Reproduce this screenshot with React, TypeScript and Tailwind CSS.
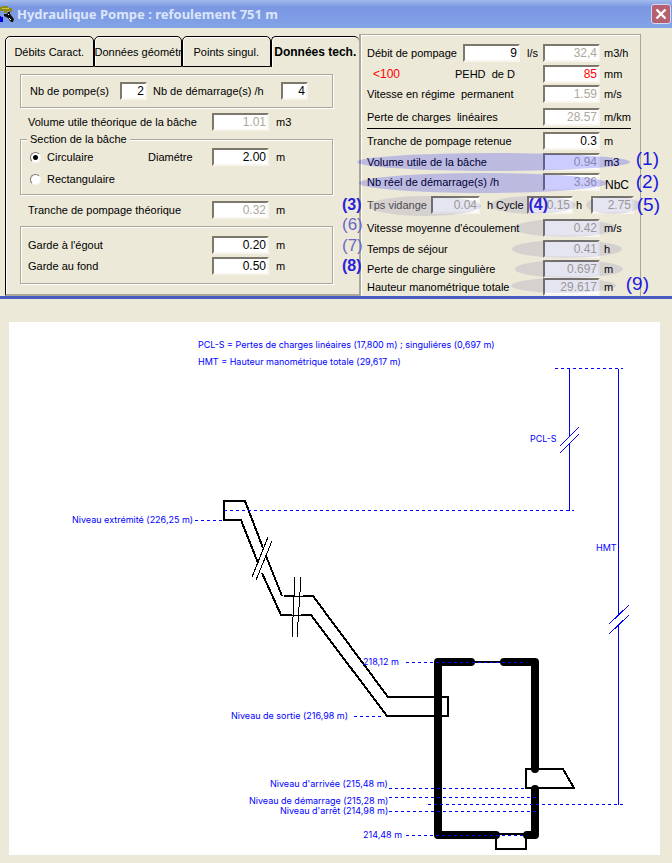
import React from "react";
import { clsx } from "clsx";

const etched =
  "border border-[#aca899] shadow-[1px_1px_0_#fff,inset_1px_1px_0_#fff]";

const radio =
  "mr-[6px] h-[11px] w-[11px] appearance-none rounded-full border border-t-[#7c796c] border-l-[#7c796c] border-r-[#f7f5ec] border-b-[#f7f5ec] bg-white checked:bg-[radial-gradient(circle,#000_2px,#fff_3px)]";

function Field({
  id,
  value,
  width = "w-[57px]",
  tone = "text-black",
  label,
}: {
  id?: string;
  value: string;
  width?: string;
  tone?: string;
  label?: string;
}) {
  return (
    <input
      id={id}
      aria-label={label}
      defaultValue={value}
      className={clsx(
        "h-[18px] shrink-0 border-2 border-t-[#7c796c] border-l-[#7c796c] border-r-[#f7f5ec] border-b-[#f7f5ec] bg-white pr-px text-right text-[12px] leading-[14px] outline-none",
        width,
        tone,
      )}
    />
  );
}

const GREY = "text-[#aca899]";

function LeftRow({
  id,
  label,
  value,
  unit,
  tone,
  className,
}: {
  id: string;
  label: string;
  value: string;
  unit: string;
  tone?: string;
  className?: string;
}) {
  return (
    <div className={clsx("flex h-[18px] items-center", className)}>
      <label htmlFor={id} className="flex-1">
        {label}
      </label>
      <Field id={id} value={value} tone={tone} />
      <span className="w-[63px] pl-[7px]">{unit}</span>
    </div>
  );
}

function Halo({ className, strong }: { className: string; strong?: boolean }) {
  return (
    <span
      className={clsx(
        "pointer-events-none absolute rounded-[50%]",
        strong ? "bg-[#0000ff]/20" : "bg-[#000080]/10",
        className,
      )}
    />
  );
}

function Mark({
  children,
  className,
  kind = "large",
}: {
  children: string;
  className: string;
  kind?: "large" | "bold" | "light";
}) {
  return (
    <span
      className={clsx(
        "pointer-events-none absolute leading-[18px]",
        kind === "large" && "text-[19px] text-[#2018e0]",
        kind === "bold" && "text-[16px] font-bold text-[#2a22d8]",
        kind === "light" && "text-[17px] text-[#6a68c8]",
        className,
      )}
    >
      {children}
    </span>
  );
}

function RightRow({
  id,
  label,
  value,
  unit,
  tone = GREY,
  className,
  children,
}: {
  id: string;
  label: React.ReactNode;
  value: string;
  unit: string;
  tone?: string;
  className?: string;
  children?: React.ReactNode;
}) {
  return (
    <div className={clsx("relative flex h-[18px] items-center", className)}>
      <label htmlFor={id} className="flex-1 whitespace-pre">
        {label}
      </label>
      <Field id={id} value={value} tone={tone} />
      <span className="w-[40px] pl-1">{unit}</span>
      {children}
    </div>
  );
}

function TitleBar() {
  return (
    <header className="flex h-[28px] items-center bg-linear-to-b from-[#a3bbea] via-[#7b96e2] via-25% to-[#82a4e8] pr-px">
      <svg width="14" height="18" viewBox="0 0 14 18" aria-hidden="true">
        <path d="M0 2h2V1h6v2h4v4H9V6H7v2H4V6H0z" fill="#8f8a12" />
        <path d="M2 3h7v1H2z" fill="#c9c444" />
        <path d="M0 11v5M0 13h2v3H0" stroke="#0000e0" strokeWidth="2" fill="none" />
        <path d="M4 9h3l1-2h2v2l4 5-1 3h-2l-3-4-4-2z" fill="#111" />
        <path d="M8 9l1 1M9 13l2 2" stroke="#fff" />
      </svg>
      <h1 className="ml-[3px] flex-1 font-['Noto_Sans',sans-serif] text-[13px] leading-[18px] font-bold text-[#dce6fb]">
        Hydraulique Pompe : refoulement 751 m
      </h1>
      <button
        aria-label="Fermer"
        className="grid h-[20px] w-[20px] place-items-center rounded-[3px] border border-[#d5d9f0] bg-[#b4606f]"
      >
        <svg width="12" height="12" viewBox="0 0 12 12">
          <path d="M1.5 1.5l9 9M10.5 1.5l-9 9" stroke="#fff" strokeWidth="2.4" />
        </svg>
      </button>
    </header>
  );
}

function Tabs() {
  const tabs = ["Débits Caract.", "Données géométr", "Points singul.", "Données tech."];
  return (
    <div role="tablist" className="grid h-[31px] grid-cols-4">
      {tabs.map((tab, i) => (
        <button
          key={tab}
          role="tab"
          aria-selected={i === 3}
          className={clsx(
            "rounded-t-[5px] border-t border-l border-black text-center whitespace-nowrap shadow-[inset_1px_1px_0_#fff]",
            i === 3 ? "text-[12px] font-bold" : "border-r border-b",
          )}
        >
          {tab}
        </button>
      ))}
    </div>
  );
}

function TechPanel() {
  return (
    <section className="flex flex-col pt-2">
      <Tabs />
      <div className="flex-1 border-b-2 border-l border-b-[#aca899] border-l-black pr-[26px] pb-[9px] pl-[14px] shadow-[inset_1px_0_0_#fff]">
        <div className={clsx("mt-[7px] flex h-[34px] items-center px-[9px]", etched)}>
          <label htmlFor="pompes" className="w-[90px]">
            Nb de pompe(s)
          </label>
          <Field id="pompes" value="2" width="w-[27px]" />
          <label htmlFor="demarrages" className="flex-1 pl-[6px]">
            Nb de démarrage(s) /h
          </label>
          <Field id="demarrages" value="4" width="w-[27px]" />
          <span className="w-[15px]" />
        </div>
        <LeftRow
          id="volume"
          label="Volume utile théorique de la bâche"
          value="1.01"
          unit="m3"
          tone={GREY}
          className="mt-[5px] pr-px pl-2"
        />
        <fieldset className={clsx("mt-[2px] h-[62px] pl-[9px]", etched)}>
          <legend className="-ml-[3px] bg-[#ece9d8] px-[3px] leading-[13px]">
            Section de la bâche
          </legend>
          <div className="mt-[2px] flex h-[18px] items-center">
            <label className="flex w-[118px] items-center">
              <input type="radio" name="section" defaultChecked className={radio} />
              Circulaire
            </label>
            <label htmlFor="diametre" className="flex-1">
              Diamétre
            </label>
            <Field id="diametre" value="2.00" />
            <span className="w-[63px] pl-[7px]">m</span>
          </div>
          <label className="mt-[4px] flex h-[18px] items-center">
            <input type="radio" name="section" className={radio} />
            Rectangulaire
          </label>
        </fieldset>
        <LeftRow
          id="tranche"
          label="Tranche de pompage théorique"
          value="0.32"
          unit="m"
          tone={GREY}
          className="mt-[6px] pr-px pl-2"
        />
        <div className={clsx("mt-[7px] h-[58px] pt-[9px] pl-[7px]", etched)}>
          <LeftRow id="egout" label="Garde à l'égout" value="0.20" unit="m" />
          <LeftRow
            id="fond"
            label="Garde au fond"
            value="0.50"
            unit="m"
            className="mt-[3px]"
          />
        </div>
      </div>
    </section>
  );
}

function ResultsPanel() {
  return (
    <section className="mt-[6px] border-t border-r border-l-2 border-[#aca899] pt-[9px] pl-[6px] shadow-[inset_1px_1px_0_#fff]">
      <div className="relative flex h-[18px] items-center">
        <label htmlFor="debit" className="flex-1 whitespace-nowrap">
          Débit de pompage
        </label>
        <Field id="debit" value="9" />
        <span className="w-[23px] pl-[7px]">l/s</span>
        <Field value="32,4" tone={GREY} label="Débit m3/h" />
        <span className="w-[40px] pl-1">m3/h</span>
      </div>
      <RightRow
        id="diam"
        label={
          <span className="flex">
            <span className="w-[88px] pl-[6px] text-[12px] text-[#ff0000]">&lt;100</span>
            {"PEHD  de D"}
          </span>
        }
        value="85"
        unit="mm"
        tone="text-[#ff0000]"
        className="mt-[3px]"
      />
      <RightRow
        id="vitesse"
        label="Vitesse en régime  permanent"
        value="1.59"
        unit="m/s"
        className="mt-[2px]"
      />
      <RightRow
        id="perte"
        label="Perte de charges  linéaires"
        value="28.57"
        unit="m/km"
        className="mt-[5px]"
      />
      <hr className="mt-[2px] mr-[9px] border-black" />
      <RightRow
        id="retenue"
        label="Tranche de pompage retenue"
        value="0.3"
        unit="m"
        tone="text-black"
        className="mt-[3px]"
      />
      <RightRow
        id="utile"
        label="Volume utile de la bâche"
        value="0.94"
        unit="m3"
        className="mt-[3px]"
      >
        <Halo strong className="top-0 right-[10px] -left-[10px] h-[18px]" />
        <Mark className="-top-[3px] -right-[19px]">(1)</Mark>
      </RightRow>
      <RightRow
        id="reel"
        label="Nb réel de démarrage(s) /h"
        value="3.36"
        unit=""
        className="mt-[2px]"
      >
        <Halo strong className="top-0 right-[33px] -left-[8px] h-[20px]" />
        <span className="absolute top-[5px] right-[11px] text-[12px]">NbC</span>
        <Mark className="top-0 -right-[19px]">(2)</Mark>
      </RightRow>
      <div className="relative mt-[5px] flex h-[18px] items-center">
        <label htmlFor="vidange" className="flex-1 whitespace-nowrap text-[#55534f]">
          Tps vidange
        </label>
        <Field id="vidange" value="0.04" width="w-[49px]" tone={GREY} />
        <span className="w-[16px] pl-[7px]">h</span>
        <label htmlFor="cycle" className="w-[31px]">
          Cycle
        </label>
        <Field id="cycle" value="0.15" width="w-[46px]" tone={GREY} />
        <span className="w-[18px] pl-[3px]">h</span>
        <Field value="2.75" width="w-[43px]" tone={GREY} label="NbC" />
        <span className="w-[6px]" />
        <Halo className="top-0 left-[2px] h-[20px] w-[112px]" />
        <Halo className="top-0 right-[64px] h-[18px] w-[86px]" />
        <Halo className="top-0 right-0 h-[18px] w-[54px]" />
        <Mark kind="bold" className="top-0 -left-[25px]">(3)</Mark>
        <Mark kind="bold" className="top-0 right-[92px]">(4)</Mark>
        <Mark className="top-0 -right-[20px]">(5)</Mark>
      </div>
      <RightRow
        id="ecoulement"
        label="Vitesse moyenne d'écoulement"
        value="0.42"
        unit="m/s"
        className="mt-[5px]"
      >
        <Halo className="top-0 right-[24px] h-[18px] w-[102px]" />
        <Mark kind="light" className="-top-[3px] -left-[25px]">(6)</Mark>
      </RightRow>
      <RightRow
        id="sejour"
        label="Temps de séjour"
        value="0.41"
        unit="h"
        className="mt-[3px]"
      >
        <Halo className="top-0 right-[18px] h-[18px] w-[110px]" />
        <Mark kind="light" className="-top-[3px] -left-[25px]">(7)</Mark>
      </RightRow>
      <RightRow
        id="singuliere"
        label="Perte de charge singulière"
        value="0.697"
        unit="m"
        className="mt-[2px]"
      >
        <Halo className="top-0 right-[17px] h-[18px] w-[108px]" />
        <Mark kind="bold" className="-top-[3px] -left-[25px]">(8)</Mark>
      </RightRow>
      <RightRow id="hauteur" label="Hauteur manométrique totale" value="29.617" unit="m">
        <Halo className="top-0 right-[24px] h-[15px] w-[105px]" />
        <Mark className="-top-[3px] -right-[9px]">(9)</Mark>
      </RightRow>
    </section>
  );
}

const dashed = [
  [555, 368.5, 623],
  [224, 510.5, 574],
  [195, 520.5, 223],
  [406, 662.5, 524],
  [354, 716.5, 382],
  [389, 788.5, 525],
  [389, 797.5, 536],
  [428, 804.5, 623],
  [389, 811.5, 536],
  [406, 835.5, 526],
];

const captions: [number, number, string][] = [
  [198, 348, "PCL-S = Pertes de charges linéaires (17,800 m) ; singuliéres (0,697 m)"],
  [198, 365, "HMT = Hauteur manométrique totale (29,617 m)"],
  [530, 442, "PCL-S"],
  [596, 551, "HMT"],
  [72, 523, "Niveau extrémité (226,25 m)"],
  [363, 665, "218,12 m"],
  [231, 719, "Niveau de sortie (216,98 m)"],
  [270, 787, "Niveau d'arrivée (215,48 m)"],
  [249, 804, "Niveau de démarrage (215,28 m)"],
  [280, 814, "Niveau d'arrêt (214,98 m)"],
  [363, 838, "214,48 m"],
];

function Diagram() {
  return (
    <figure className="mt-[23px] mr-3 ml-[9px] bg-white">
      <svg
        viewBox="9 322 651 533"
        className="block w-full"
        role="img"
        aria-label="Profil de refoulement"
      >
        <g fill="none" stroke="#000" strokeWidth="2" shapeRendering="crispEdges">
          <path d="M258 563L241 520H224V501H245L263 548M266 556L282 596M284 596H294M303 596H313L388 697H448V716H387L311 615H301M292 615H281L262 573" />
          <path d="M294 596H303M292 615H301" strokeWidth="1" />
          <path d="M268 537L252 577M272 541L256 580M295 577L292 637M301 577L297 637" strokeWidth="1" />
          <path d="M474 662H502M498 834H525M496 838V849H526V838" />
          <path d="M526 788V769H563L574 788Z" />
        </g>
        <path
          d="M471 662H438V835H496M504 662H535V769M535 789V835H527"
          fill="none"
          stroke="#000"
          strokeWidth="8"
          strokeLinecap="round"
          strokeLinejoin="round"
        />
        <g stroke="#0000ff" shapeRendering="crispEdges" fill="none">
          {dashed.map(([x1, y, x2]) => (
            <line key={y} x1={x1} x2={x2} y1={y} y2={y} strokeDasharray="3 3" />
          ))}
          <path d="M569.5 368V436M569.5 443V511M618.5 369V615M618.5 625V805" />
          <path d="M560 446L579 427M560 453L579 434M609 624L629 605M609 634L629 615" />
        </g>
        <g fill="#0000ff" className="font-['Inter',sans-serif] text-[9px]">
          {captions.map(([x, y, text]) => (
            <text key={text} x={x} y={y}>
              {text}
            </text>
          ))}
        </g>
      </svg>
    </figure>
  );
}

export default function App() {
  return (
    <main className="min-h-screen bg-[#ece9d8] pb-2 font-['Liberation_Sans',Arial,sans-serif] text-[11px] leading-[14px] text-black">
      <div className="border-b-[3px] border-[#4a5bc4]">
        <TitleBar />
        <div className="grid h-[268px] grid-cols-[354fr_282fr] pr-[31px] pl-[5px]">
          <TechPanel />
          <ResultsPanel />
        </div>
      </div>
      <Diagram />
    </main>
  );
}
